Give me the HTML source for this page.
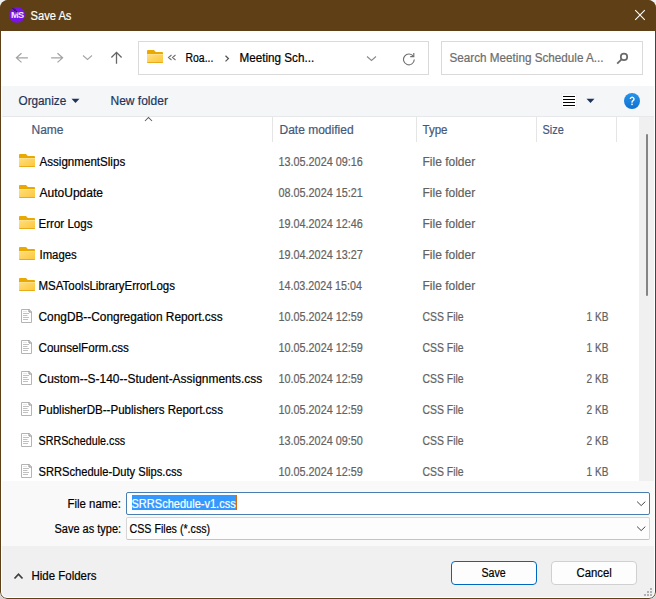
<!DOCTYPE html>
<html><head><meta charset="utf-8">
<style>
*{margin:0;padding:0;box-sizing:border-box}
html{background:linear-gradient(#f0f0f0 50%,#d4d4d4 50%)}
html,body{width:656px;height:599px;overflow:hidden}
body{font-family:"Liberation Sans",sans-serif;font-size:12px;position:relative}
#root{position:absolute;left:0;top:0;width:656px;height:599px;clip-path:inset(0 round 8px 8px 7px 7px);background:#f0f0f0}
.a{position:absolute;white-space:nowrap}
.t{font-size:12px;line-height:14px;-webkit-text-stroke:0.2px currentColor}
.ic{position:absolute}
.box{position:absolute;border:1px solid #d9d9d9;background:#fff}
.sep{position:absolute;top:117px;width:1px;height:25px;background:#e5e5e5}
.btn{position:absolute;top:561px;width:86px;height:24px;border:1px solid #d0d0d0;border-radius:4px;background:#fdfdfd}
</style></head><body><div id="root">
<svg width="0" height="0" style="position:absolute"><defs>
<linearGradient id="fg" x1="0" y1="0" x2="1" y2="1"><stop offset="0" stop-color="#ffdf7e"/><stop offset="1" stop-color="#fcc63a"/></linearGradient>
<linearGradient id="hg" x1="0" y1="0" x2="0" y2="1"><stop offset="0" stop-color="#2794ea"/><stop offset="1" stop-color="#0f70d2"/></linearGradient>
</defs></svg>
<div class="a" style="left:0;top:0;width:656px;height:31px;background:#5e3f16"></div>
<div class="a" style="left:0;top:31px;width:656px;height:55px;background:#fff"></div>
<div class="a" style="left:0;top:86px;width:656px;height:30px;background:#f4f6f8"></div>
<div class="a" style="left:0;top:116px;width:656px;height:1px;background:#e6e8eb"></div>
<div class="a" style="left:0;top:117px;width:639px;height:364px;background:#fff"></div>
<div class="a" style="left:639px;top:117px;width:17px;height:364px;background:#f0f0f0"></div>
<div class="a" style="left:646px;top:134px;width:2px;height:162px;background:#858585;border-radius:1px"></div>
<div class="a" style="left:0;top:481px;width:656px;height:65px;background:#f9f9f9"></div>
<div class="a" style="left:0;top:546px;width:656px;height:53px;background:#f0f0f0"></div>

<svg class="ic" width="18" height="18" viewBox="0 0 18 18" style="left:8px;top:6px"><circle cx="9" cy="8.85" r="7.85" fill="#7a12ea"/><text x="2.9" y="12" font-family="Liberation Sans" font-weight="bold" font-size="9.2" fill="#f0e8ff" letter-spacing="-0.5">MS</text><path d="M4.4 1.9L7.1 5.1M6.4 2.6L9.1 6.4M8.6 5.2L9.0 8.2" stroke="#1e0e30" stroke-width="0.8" fill="none"/></svg>
<svg class="ic" width="12" height="12" viewBox="0 0 12 12" style="left:634px;top:9px"><path d="M1.2 1.2L10.8 10.8M10.8 1.2L1.2 10.8" stroke="#fff" stroke-width="1.1"/></svg>

<svg class="ic" width="14" height="13" viewBox="0 0 14 13" style="left:15px;top:51px"><path d="M1.4 6.85H12.9M6.5 2.3L1.4 6.85L6.5 11.4" fill="none" stroke="#a3a3a3" stroke-width="1.25"/></svg>
<svg class="ic" width="14" height="13" viewBox="0 0 14 13" style="left:50px;top:51px"><path d="M1.1 6.85H12.6M7.5 2.3L12.6 6.85L7.5 11.4" fill="none" stroke="#a3a3a3" stroke-width="1.25"/></svg>
<svg class="ic" width="11" height="7" viewBox="0 0 11 7" style="left:82px;top:54px"><path d="M1 1.5L5.5 5.5L10 1.5" fill="none" stroke="#a6a6a6" stroke-width="1.1"/></svg>
<svg class="ic" width="14" height="14" viewBox="0 0 14 14" style="left:110px;top:51px"><path d="M6.5 12.7V1.6M1.4 6.5L6.5 1.4L11.6 6.5" fill="none" stroke="#666" stroke-width="1.3"/></svg>
<div class="box" style="left:138px;top:41px;width:291px;height:34px;border-color:#dadada"></div>
<svg class="ic" width="16" height="13" viewBox="0 0 16 13" style="left:147px;top:50px"><path d="M0 1a1 1 0 0 1 1-1h6l1.8 2H15a1 1 0 0 1 1 1V12a1 1 0 0 1-1 1H1a1 1 0 0 1-1-1z" fill="#eaa900"/><path d="M0 4H16V12a1 1 0 0 1-1 1H1a1 1 0 0 1-1-1z" fill="url(#fg)"/><rect x="0" y="4" width="16" height="0.7" fill="#ffe49a"/><rect x="0.4" y="12.1" width="15.2" height="0.9" fill="#e6a814"/></svg>
<svg class="ic" width="10" height="7" viewBox="0 0 10 7" style="left:167px;top:54px"><path d="M4.5 1L1.5 3.5L4.5 6M8.5 1L5.5 3.5L8.5 6" fill="none" stroke="#707070" stroke-width="1.1"/></svg>
<svg class="ic" width="6" height="8" viewBox="0 0 6 8" style="left:224px;top:54px"><path d="M1.5 1.8L4.4 4.6L1.5 7.4" fill="none" stroke="#555" stroke-width="1.3"/></svg>
<svg class="ic" width="11" height="7" viewBox="0 0 11 7" style="left:366px;top:55px"><path d="M1 1.5L5.5 5.5L10 1.5" fill="none" stroke="#8a8a8a" stroke-width="1.1"/></svg>
<svg class="ic" width="14" height="14" viewBox="0 0 14 14" style="left:402px;top:52px"><path d="M11.4 4.4A5.4 5.4 0 1 0 12.3 7.6" fill="none" stroke="#707070" stroke-width="1.15"/><path d="M11.8 1V4.6H8.2" fill="none" stroke="#707070" stroke-width="1.15"/></svg>
<div class="box" style="left:441px;top:41px;width:202px;height:34px;border-color:#dadada"></div>
<svg class="ic" width="13" height="13" viewBox="0 0 13 13" style="left:615px;top:52px"><circle cx="9" cy="4.9" r="3.2" fill="none" stroke="#6a6a6a" stroke-width="1.7"/><path d="M6.8 7.2L2.2 11.6" stroke="#6a6a6a" stroke-width="1.8"/></svg>

<svg class="ic" width="9" height="6" viewBox="0 0 9 6" style="left:71px;top:98px"><path d="M0.5 0.8H8.5L4.5 5z" fill="#1e3458"/></svg>
<svg class="ic" width="16" height="16" viewBox="0 0 16 16" style="left:561px;top:93px"><rect x="0" y="0" width="16" height="16" fill="#f1f1f1"/><rect x="1" y="1.5" width="14" height="13" fill="#fff"/><path d="M2 3.5H14M2 6.5H14M2 9.5H14M2 12.5H14" stroke="#000" stroke-width="1"/></svg>
<svg class="ic" width="9" height="6" viewBox="0 0 9 6" style="left:586px;top:98px"><path d="M0.5 0.8H8.5L4.5 5z" fill="#1e3458"/></svg>
<svg class="ic" width="16" height="16" viewBox="0 0 16 16" style="left:624px;top:93px"><circle cx="8" cy="8" r="8" fill="url(#hg)"/><path d="M6.3 6.1A1.85 1.85 0 1 1 9.1 7.7C8.3 8.2 8 8.6 8 9.7" stroke="#fff" stroke-width="1.4" fill="none"/><rect x="7.25" y="10.6" width="1.5" height="1.5" fill="#fff"/></svg>

<svg class="ic" width="9" height="6" viewBox="0 0 9 6" style="left:144px;top:116px"><path d="M1 5L4.5 1.5L8 5" fill="none" stroke="#5a5a5a" stroke-width="1.05"/></svg>
<div class="sep" style="left:272px"></div>
<div class="sep" style="left:416px"></div>
<div class="sep" style="left:536px"></div>
<div class="sep" style="left:616px"></div>
<svg class="ic" width="16" height="13" viewBox="0 0 16 13" style="left:19px;top:154px"><path d="M0 1a1 1 0 0 1 1-1h6l1.8 2H15a1 1 0 0 1 1 1V12a1 1 0 0 1-1 1H1a1 1 0 0 1-1-1z" fill="#eaa900"/><path d="M0 4H16V12a1 1 0 0 1-1 1H1a1 1 0 0 1-1-1z" fill="url(#fg)"/><rect x="0" y="4" width="16" height="0.7" fill="#ffe49a"/><rect x="0.4" y="12.1" width="15.2" height="0.9" fill="#e6a814"/></svg>
<svg class="ic" width="16" height="13" viewBox="0 0 16 13" style="left:19px;top:185px"><path d="M0 1a1 1 0 0 1 1-1h6l1.8 2H15a1 1 0 0 1 1 1V12a1 1 0 0 1-1 1H1a1 1 0 0 1-1-1z" fill="#eaa900"/><path d="M0 4H16V12a1 1 0 0 1-1 1H1a1 1 0 0 1-1-1z" fill="url(#fg)"/><rect x="0" y="4" width="16" height="0.7" fill="#ffe49a"/><rect x="0.4" y="12.1" width="15.2" height="0.9" fill="#e6a814"/></svg>
<svg class="ic" width="16" height="13" viewBox="0 0 16 13" style="left:19px;top:216px"><path d="M0 1a1 1 0 0 1 1-1h6l1.8 2H15a1 1 0 0 1 1 1V12a1 1 0 0 1-1 1H1a1 1 0 0 1-1-1z" fill="#eaa900"/><path d="M0 4H16V12a1 1 0 0 1-1 1H1a1 1 0 0 1-1-1z" fill="url(#fg)"/><rect x="0" y="4" width="16" height="0.7" fill="#ffe49a"/><rect x="0.4" y="12.1" width="15.2" height="0.9" fill="#e6a814"/></svg>
<svg class="ic" width="16" height="13" viewBox="0 0 16 13" style="left:19px;top:247px"><path d="M0 1a1 1 0 0 1 1-1h6l1.8 2H15a1 1 0 0 1 1 1V12a1 1 0 0 1-1 1H1a1 1 0 0 1-1-1z" fill="#eaa900"/><path d="M0 4H16V12a1 1 0 0 1-1 1H1a1 1 0 0 1-1-1z" fill="url(#fg)"/><rect x="0" y="4" width="16" height="0.7" fill="#ffe49a"/><rect x="0.4" y="12.1" width="15.2" height="0.9" fill="#e6a814"/></svg>
<svg class="ic" width="16" height="13" viewBox="0 0 16 13" style="left:19px;top:278px"><path d="M0 1a1 1 0 0 1 1-1h6l1.8 2H15a1 1 0 0 1 1 1V12a1 1 0 0 1-1 1H1a1 1 0 0 1-1-1z" fill="#eaa900"/><path d="M0 4H16V12a1 1 0 0 1-1 1H1a1 1 0 0 1-1-1z" fill="url(#fg)"/><rect x="0" y="4" width="16" height="0.7" fill="#ffe49a"/><rect x="0.4" y="12.1" width="15.2" height="0.9" fill="#e6a814"/></svg>
<svg class="ic" width="12" height="14" viewBox="0 0 12 14" style="left:21px;top:309px"><path d="M0.5 0.5h7.8l2.2 2.2v10.8h-10z" fill="#fff" stroke="#b4b4b4"/><path d="M8 0.5v2.5h2.5" fill="none" stroke="#8a8a8a"/><path d="M2 2.5h4M2 4.5h6M2 6.5h4.5M2 8.5h6M2 10.5h5" stroke="#c0c0c0"/><path d="M2 2.5h4" stroke="#e6e6e6"/></svg>
<svg class="ic" width="12" height="14" viewBox="0 0 12 14" style="left:21px;top:340px"><path d="M0.5 0.5h7.8l2.2 2.2v10.8h-10z" fill="#fff" stroke="#b4b4b4"/><path d="M8 0.5v2.5h2.5" fill="none" stroke="#8a8a8a"/><path d="M2 2.5h4M2 4.5h6M2 6.5h4.5M2 8.5h6M2 10.5h5" stroke="#c0c0c0"/><path d="M2 2.5h4" stroke="#e6e6e6"/></svg>
<svg class="ic" width="12" height="14" viewBox="0 0 12 14" style="left:21px;top:371px"><path d="M0.5 0.5h7.8l2.2 2.2v10.8h-10z" fill="#fff" stroke="#b4b4b4"/><path d="M8 0.5v2.5h2.5" fill="none" stroke="#8a8a8a"/><path d="M2 2.5h4M2 4.5h6M2 6.5h4.5M2 8.5h6M2 10.5h5" stroke="#c0c0c0"/><path d="M2 2.5h4" stroke="#e6e6e6"/></svg>
<svg class="ic" width="12" height="14" viewBox="0 0 12 14" style="left:21px;top:402px"><path d="M0.5 0.5h7.8l2.2 2.2v10.8h-10z" fill="#fff" stroke="#b4b4b4"/><path d="M8 0.5v2.5h2.5" fill="none" stroke="#8a8a8a"/><path d="M2 2.5h4M2 4.5h6M2 6.5h4.5M2 8.5h6M2 10.5h5" stroke="#c0c0c0"/><path d="M2 2.5h4" stroke="#e6e6e6"/></svg>
<svg class="ic" width="12" height="14" viewBox="0 0 12 14" style="left:21px;top:433px"><path d="M0.5 0.5h7.8l2.2 2.2v10.8h-10z" fill="#fff" stroke="#b4b4b4"/><path d="M8 0.5v2.5h2.5" fill="none" stroke="#8a8a8a"/><path d="M2 2.5h4M2 4.5h6M2 6.5h4.5M2 8.5h6M2 10.5h5" stroke="#c0c0c0"/><path d="M2 2.5h4" stroke="#e6e6e6"/></svg>
<svg class="ic" width="12" height="14" viewBox="0 0 12 14" style="left:21px;top:464px"><path d="M0.5 0.5h7.8l2.2 2.2v10.8h-10z" fill="#fff" stroke="#b4b4b4"/><path d="M8 0.5v2.5h2.5" fill="none" stroke="#8a8a8a"/><path d="M2 2.5h4M2 4.5h6M2 6.5h4.5M2 8.5h6M2 10.5h5" stroke="#c0c0c0"/><path d="M2 2.5h4" stroke="#e6e6e6"/></svg>

<div class="box" style="left:126px;top:492px;width:524px;height:23px;border:1px solid #4a7db0;border-radius:2px"></div>
<div class="a" style="left:132px;top:495px;width:104px;height:15px;background:#3399ff"></div>
<div class="a" style="left:236px;top:495px;width:1px;height:15px;background:#d86a10"></div>
<svg class="ic" width="11" height="7" viewBox="0 0 11 7" style="left:636px;top:500px"><path d="M1.1 1.6L5.2 5.6L9.3 1.6" fill="none" stroke="#444" stroke-width="1"/></svg>
<div class="box" style="left:126px;top:517px;width:524px;height:23px;border:1px solid #d6d6d6;border-bottom:1px solid #c4c4c4;border-radius:2px;background:#fdfdfd"></div>
<svg class="ic" width="11" height="7" viewBox="0 0 11 7" style="left:636px;top:525px"><path d="M1.1 1.6L5.2 5.6L9.3 1.6" fill="none" stroke="#444" stroke-width="1"/></svg>
<svg class="ic" width="11" height="8" viewBox="0 0 11 8" style="left:13px;top:572px"><path d="M1.5 6.5L5.5 2.2L9.5 6.5" fill="none" stroke="#404040" stroke-width="1.8"/></svg>
<div class="btn" style="left:451px;border-color:#0067c0"></div>
<div class="btn" style="left:551px"></div>
<svg class="ic" width="8" height="8" viewBox="0 0 8 8" style="left:644px;top:588px"><g fill="#b2b2b2"><rect x="6" y="0" width="2" height="2"/><rect x="3" y="3" width="2" height="2"/><rect x="6" y="3" width="2" height="2"/><rect x="0" y="6" width="2" height="2"/><rect x="3" y="6" width="2" height="2"/><rect x="6" y="6" width="2" height="2"/></g></svg>
<div class="a t" id="title" style="left:31px;top:9px;letter-spacing:0.000px;transform:translateX(-0.5px) scaleX(0.9302);transform-origin:0 0;color:#fff">Save As</div>
<div class="a t" id="roa" style="left:186px;top:51px;letter-spacing:0.000px;transform:translateX(-0.5px) scaleX(0.8710);transform-origin:0 0;color:#000">Roa...</div>
<div class="a t" id="mtg" style="left:240px;top:51px;letter-spacing:0.000px;transform:translateX(-0.5px) scaleX(0.9733);transform-origin:0 0;color:#000">Meeting Sch...</div>
<div class="a t" id="search" style="left:450px;top:51px;letter-spacing:0.000px;transform:translateX(-0.5px) scaleX(0.9744);transform-origin:0 0;color:#6d6d6d">Search Meeting Schedule A...</div>
<div class="a t" id="org" style="left:19px;top:94px;letter-spacing:0.000px;transform:translateX(-0.5px) scaleX(0.9792);transform-origin:0 0;color:#1e3458">Organize</div>
<div class="a t" id="newf" style="left:111px;top:94px;letter-spacing:0.000px;transform:translateX(-0.5px) scaleX(1.0003);transform-origin:0 0;color:#1e3458">New folder</div>
<div class="a t" id="h_name" style="left:32px;top:123px;letter-spacing:0.000px;transform:translateX(-0.5px) scaleX(1.0010);transform-origin:0 0;color:#44587a">Name</div>
<div class="a t" id="h_date" style="left:280px;top:123px;letter-spacing:0.000px;transform:translateX(-0.5px) scaleX(1.0002);transform-origin:0 0;color:#44587a">Date modified</div>
<div class="a t" id="h_type" style="left:423px;top:123px;letter-spacing:0.000px;transform:translateX(-0.5px) scaleX(0.9600);transform-origin:0 0;color:#44587a">Type</div>
<div class="a t" id="h_size" style="left:543px;top:123px;letter-spacing:0.000px;transform:translateX(-0.5px) scaleX(0.9091);transform-origin:0 0;color:#44587a">Size</div>
<div class="a t" id="n0" style="left:40px;top:155px;letter-spacing:0.000px;transform:translateX(-0.5px) scaleX(0.9660);transform-origin:0 0;color:#000">AssignmentSlips</div>
<div class="a t" id="d0" style="left:279px;top:155px;letter-spacing:0.000px;transform:translateX(-0.5px) scaleX(0.9022);transform-origin:0 0;color:#626262">13.05.2024 09:16</div>
<div class="a t" id="t0" style="left:423px;top:155px;letter-spacing:0.000px;transform:translateX(-0.5px) scaleX(1.0004);transform-origin:0 0;color:#626262">File folder</div>
<div class="a t" id="n1" style="left:40px;top:186px;letter-spacing:0.000px;transform:translateX(-0.5px) scaleX(1.0010);transform-origin:0 0;color:#000">AutoUpdate</div>
<div class="a t" id="d1" style="left:279px;top:186px;letter-spacing:0.000px;transform:translateX(-0.5px) scaleX(0.9022);transform-origin:0 0;color:#626262">08.05.2024 15:21</div>
<div class="a t" id="t1" style="left:423px;top:186px;letter-spacing:0.000px;transform:translateX(-0.5px) scaleX(1.0004);transform-origin:0 0;color:#626262">File folder</div>
<div class="a t" id="n2" style="left:39px;top:217px;letter-spacing:0.000px;transform:translateX(-0.5px) scaleX(0.9636);transform-origin:0 0;color:#000">Error Logs</div>
<div class="a t" id="d2" style="left:279px;top:217px;letter-spacing:0.000px;transform:translateX(-0.5px) scaleX(0.9022);transform-origin:0 0;color:#626262">19.04.2024 12:46</div>
<div class="a t" id="t2" style="left:423px;top:217px;letter-spacing:0.000px;transform:translateX(-0.5px) scaleX(1.0004);transform-origin:0 0;color:#626262">File folder</div>
<div class="a t" id="n3" style="left:40px;top:248px;letter-spacing:0.000px;transform:translateX(-0.5px) scaleX(0.9467);transform-origin:0 0;color:#000">Images</div>
<div class="a t" id="d3" style="left:279px;top:248px;letter-spacing:0.000px;transform:translateX(-0.5px) scaleX(0.9022);transform-origin:0 0;color:#626262">19.04.2024 13:27</div>
<div class="a t" id="t3" style="left:423px;top:248px;letter-spacing:0.000px;transform:translateX(-0.5px) scaleX(1.0004);transform-origin:0 0;color:#626262">File folder</div>
<div class="a t" id="n4" style="left:39px;top:279px;letter-spacing:0.000px;transform:translateX(-0.5px) scaleX(0.9577);transform-origin:0 0;color:#000">MSAToolsLibraryErrorLogs</div>
<div class="a t" id="d4" style="left:279px;top:279px;letter-spacing:0.000px;transform:translateX(-0.5px) scaleX(0.8925);transform-origin:0 0;color:#626262">14.03.2024 15:04</div>
<div class="a t" id="t4" style="left:423px;top:279px;letter-spacing:0.000px;transform:translateX(-0.5px) scaleX(1.0004);transform-origin:0 0;color:#626262">File folder</div>
<div class="a t" id="n5" style="left:39px;top:310px;letter-spacing:0.000px;transform:translateX(-0.5px) scaleX(0.9892);transform-origin:0 0;color:#000">CongDB--Congregation Report.css</div>
<div class="a t" id="d5" style="left:279px;top:310px;letter-spacing:0.000px;transform:translateX(-0.5px) scaleX(0.9022);transform-origin:0 0;color:#626262">10.05.2024 12:59</div>
<div class="a t" id="t5" style="left:423px;top:310px;letter-spacing:0.000px;transform:translateX(-0.5px) scaleX(0.8696);transform-origin:0 0;color:#626262">CSS File</div>
<div class="a t" id="s5" style="left:587px;top:310px;letter-spacing:0.000px;transform:translateX(-0.5px) scaleX(0.8400);transform-origin:0 0;color:#626262">1 KB</div>
<div class="a t" id="n6" style="left:39px;top:341px;letter-spacing:0.000px;transform:translateX(-0.5px) scaleX(0.9674);transform-origin:0 0;color:#000">CounselForm.css</div>
<div class="a t" id="d6" style="left:279px;top:341px;letter-spacing:0.000px;transform:translateX(-0.5px) scaleX(0.9022);transform-origin:0 0;color:#626262">10.05.2024 12:59</div>
<div class="a t" id="t6" style="left:423px;top:341px;letter-spacing:0.000px;transform:translateX(-0.5px) scaleX(0.8696);transform-origin:0 0;color:#626262">CSS File</div>
<div class="a t" id="s6" style="left:587px;top:341px;letter-spacing:0.000px;transform:translateX(-0.5px) scaleX(0.8400);transform-origin:0 0;color:#626262">1 KB</div>
<div class="a t" id="n7" style="left:39px;top:372px;letter-spacing:0.000px;transform:translateX(-0.5px) scaleX(0.9955);transform-origin:0 0;color:#000">Custom--S-140--Student-Assignments.css</div>
<div class="a t" id="d7" style="left:279px;top:372px;letter-spacing:0.000px;transform:translateX(-0.5px) scaleX(0.9022);transform-origin:0 0;color:#626262">10.05.2024 12:59</div>
<div class="a t" id="t7" style="left:423px;top:372px;letter-spacing:0.000px;transform:translateX(-0.5px) scaleX(0.8696);transform-origin:0 0;color:#626262">CSS File</div>
<div class="a t" id="s7" style="left:587px;top:372px;letter-spacing:0.000px;transform:translateX(-0.5px) scaleX(0.8400);transform-origin:0 0;color:#626262">2 KB</div>
<div class="a t" id="n8" style="left:39px;top:403px;letter-spacing:0.000px;transform:translateX(-0.5px) scaleX(0.9635);transform-origin:0 0;color:#000">PublisherDB--Publishers Report.css</div>
<div class="a t" id="d8" style="left:279px;top:403px;letter-spacing:0.000px;transform:translateX(-0.5px) scaleX(0.9022);transform-origin:0 0;color:#626262">10.05.2024 12:59</div>
<div class="a t" id="t8" style="left:423px;top:403px;letter-spacing:0.000px;transform:translateX(-0.5px) scaleX(0.8696);transform-origin:0 0;color:#626262">CSS File</div>
<div class="a t" id="s8" style="left:587px;top:403px;letter-spacing:0.000px;transform:translateX(-0.5px) scaleX(0.8400);transform-origin:0 0;color:#626262">2 KB</div>
<div class="a t" id="n9" style="left:39px;top:434px;letter-spacing:0.000px;transform:translateX(-0.5px) scaleX(0.8958);transform-origin:0 0;color:#000">SRRSchedule.css</div>
<div class="a t" id="d9" style="left:279px;top:434px;letter-spacing:0.000px;transform:translateX(-0.5px) scaleX(0.9022);transform-origin:0 0;color:#626262">13.05.2024 09:50</div>
<div class="a t" id="t9" style="left:423px;top:434px;letter-spacing:0.000px;transform:translateX(-0.5px) scaleX(0.8696);transform-origin:0 0;color:#626262">CSS File</div>
<div class="a t" id="s9" style="left:587px;top:434px;letter-spacing:0.000px;transform:translateX(-0.5px) scaleX(0.8400);transform-origin:0 0;color:#626262">2 KB</div>
<div class="a t" id="n10" style="left:39px;top:465px;letter-spacing:0.000px;transform:translateX(-0.5px) scaleX(0.9286);transform-origin:0 0;color:#000">SRRSchedule-Duty Slips.css</div>
<div class="a t" id="d10" style="left:279px;top:465px;letter-spacing:0.000px;transform:translateX(-0.5px) scaleX(0.9022);transform-origin:0 0;color:#626262">10.05.2024 12:59</div>
<div class="a t" id="t10" style="left:423px;top:465px;letter-spacing:0.000px;transform:translateX(-0.5px) scaleX(0.8696);transform-origin:0 0;color:#626262">CSS File</div>
<div class="a t" id="s10" style="left:587px;top:465px;letter-spacing:0.000px;transform:translateX(-0.5px) scaleX(0.8400);transform-origin:0 0;color:#626262">1 KB</div>
<div class="a t" id="fnl" style="left:68px;top:497px;letter-spacing:0.000px;transform:translateX(-0.5px) scaleX(0.9514);transform-origin:0 0;color:#000">File name:</div>
<div class="a t" id="stl" style="left:55px;top:522px;letter-spacing:0.000px;transform:translateX(-0.5px) scaleX(0.9155);transform-origin:0 0;color:#000">Save as type:</div>
<div class="a t" id="fnv" style="left:132px;top:497px;letter-spacing:0.000px;transform:translateX(-0.5px) scaleX(0.9191);transform-origin:0 0;color:#fff">SRRSchedule-v1.css</div>
<div class="a t" id="stv" style="left:130px;top:522px;letter-spacing:0.000px;transform:translateX(-0.5px) scaleX(0.8890);transform-origin:0 0;color:#000">CSS Files (*.css)</div>
<div class="a t" id="hide" style="left:32px;top:569px;letter-spacing:0.000px;transform:translateX(-0.5px) scaleX(0.9552);transform-origin:0 0;color:#000">Hide Folders</div>
<div class="a t" id="save" style="left:482px;top:566px;letter-spacing:0.000px;transform:translateX(-0.5px) scaleX(0.8846);transform-origin:0 0;color:#000">Save</div>
<div class="a t" id="cancel" style="left:577px;top:566px;letter-spacing:0.000px;transform:translateX(-0.5px) scaleX(0.9444);transform-origin:0 0;color:#000">Cancel</div>
<div class="a" style="left:1px;top:31px;width:654px;height:567px;border:1px solid #fff;border-top:0;border-radius:0 0 6px 6px"></div>
<div class="a" style="left:0;top:0;width:656px;height:599px;border:1px solid #5e3f16;border-radius:8px 8px 7px 7px"></div>
</div></body></html>
